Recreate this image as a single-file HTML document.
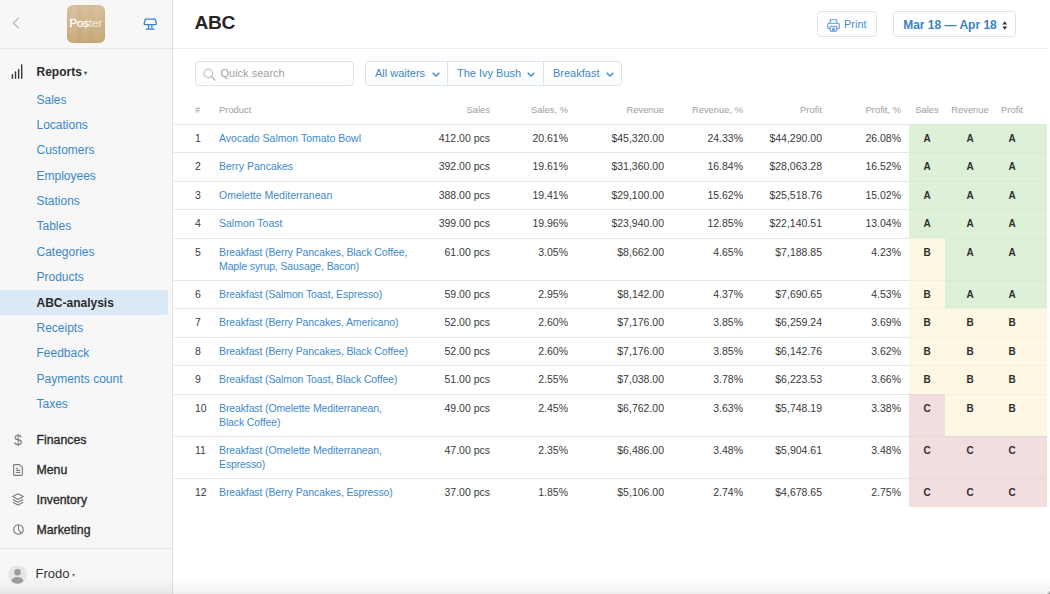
<!DOCTYPE html>
<html lang="en">
<head>
<meta charset="utf-8">
<title>ABC</title>
<style>
*{box-sizing:border-box;margin:0;padding:0}
html,body{width:1050px;height:594px;overflow:hidden;background:#fff}
body{font-family:"Liberation Sans",Arial,sans-serif;color:#333;position:relative;font-size:11px}
a{color:#3d8acb;text-decoration:none}
#side{position:absolute;left:0;top:0;width:173px;height:594px;background:#f7f7f7;border-right:1px solid #e2e2e2}
#side .top{position:absolute;left:0;top:0;width:172px;height:49px;border-bottom:1px solid #e8e8e8}
#logo{position:absolute;left:66.500px;top:5px;width:38.500px;height:37.500px;border-radius:6px;background:linear-gradient(90deg,rgba(255,255,255,0) 0,rgba(255,255,255,.07) 20%,rgba(0,0,0,.02) 32%,rgba(255,255,255,.06) 50%,rgba(0,0,0,.02) 62%,rgba(255,255,255,.05) 80%,rgba(0,0,0,.02) 100%),linear-gradient(180deg,#d7c09b 0,#d0b58b 50%,#c6a575 100%);color:#fff;font-size:11.5px;text-align:center;line-height:37px;letter-spacing:-0.1px}
.sec{position:absolute;left:36.500px;font-size:12px;font-weight:bold;color:#2b2b2b;white-space:nowrap}
.sub{position:absolute;left:36.500px;font-size:12px;color:#3a87c8;white-space:nowrap}
.ico{position:absolute}
#active{position:absolute;left:0;top:290px;width:168px;height:25px;background:#dbe8f5;border-radius:0 3px 3px 0}
#userbar{position:absolute;left:0;top:548px;width:172px;height:46px;border-top:1px solid #e2e2e2}
#main{position:absolute;left:173px;top:0;width:877px;height:594px}
#hdr{position:absolute;left:0;top:0;width:875px;height:49px;border-bottom:1px solid #efefef}
h1{position:absolute;left:21.500px;top:12px;font-size:19.200px;line-height:22px;font-weight:bold;color:#262626;letter-spacing:-0.3px}
.btn{position:absolute;border:1px solid #d9e5f1;border-radius:4px;background:#fff;color:#3a87c8;white-space:nowrap}
#search{position:absolute;left:22px;top:61px;width:158.500px;height:25px;border:1px solid #e0e0e0;border-radius:4px;color:#9e9e9e;font-size:11px;line-height:23px;padding-left:24.500px}
table{position:absolute;left:0;top:97px;width:874px;border-collapse:collapse;table-layout:fixed}
th{font-weight:normal;color:#a0a0a0;font-size:9.4px;height:27px;text-align:right;vertical-align:middle;padding:0 0 1px 0}
td{font-size:10.5px;color:#3a3a3a;text-align:right;vertical-align:top;padding:6px 0 0 0;border-top:1px solid #e6e6e6;line-height:14px;height:28.5px}
tr.two td{height:42px}
td.l,th.l{text-align:left}
td.l a{display:inline-block;max-width:189.6px}
a.bf{letter-spacing:-0.12px}
td.c,th.c{text-align:center}
td.g{background:#dff0d8;border-top-color:#d9ead2}
td.y{background:#fcf8e3;border-top-color:#f4f0db}
td.r{background:#f2dede;border-top-color:#ead6d6}
td.g,td.y,td.r{font-weight:bold;text-align:center;font-size:10px;padding-top:7px;color:#2e2e2e}
tr>td:last-child,tr>th:last-child{padding-right:18px}
#fade{position:absolute;left:0;top:577px;width:1050px;height:17px;background:linear-gradient(180deg,rgba(0,0,0,0) 0,rgba(0,0,0,0.025) 45%,rgba(0,0,0,0.04) 75%,rgba(0,0,0,0.07) 100%)}
</style>
</head>
<body>
<div id="side">
 <div class="top">
  <svg class="ico" style="left:12px;top:17px" width="8" height="12" viewBox="0 0 8 12"><path d="M6.800.800 1.400 6 6.800 11.200" fill="none" stroke="#bdbdbd" stroke-width="1.500"/></svg>
  <div id="logo"><b style="font-weight:normal;-webkit-text-stroke:0.3px #fff">Pos</b><span style="opacity:.72">ter</span></div>
  <svg class="ico" style="left:142.500px;top:18px" width="14.500" height="12.500" viewBox="0 0 16 13"><path d="M3.300.800h9.400q.9 0 1.100.9l.9 4q.2 1.100-.9 1.100H2.200q-1.100 0-.9-1.100l.9-4q.2-.9 1.100-.9zM6.200 6.800v4.900M9.800 6.800v4.900M3.800 11.900h8.400" fill="none" stroke="#3c80d6" stroke-width="1.400" stroke-linejoin="round" stroke-linecap="round"/></svg>
 </div>
 <svg class="ico" style="left:11px;top:64px" width="13" height="15" viewBox="0 0 13 15"><path d="M1.400 14.200v-3.600M4.500 14.200v-6.200M7.600 14.200v-8.800M10.700 14.200V1" stroke="#3a3a3a" stroke-width="1.450" fill="none" stroke-linecap="round"/></svg>
 <div class="sec" style="top:65px">Reports<span style="font-size:6px;vertical-align:1.500px;color:#555;margin-left:2.500px">&#9662;</span></div>
 <div id="active"></div>
 <a class="sub" style="top:93px">Sales</a>
 <a class="sub" style="top:118px">Locations</a>
 <a class="sub" style="top:143px">Customers</a>
 <a class="sub" style="top:169px">Employees</a>
 <a class="sub" style="top:194px">Stations</a>
 <a class="sub" style="top:219px">Tables</a>
 <a class="sub" style="top:245px">Categories</a>
 <a class="sub" style="top:270px">Products</a>
 <div class="sec" style="top:296px">ABC-analysis</div>
 <a class="sub" style="top:321px">Receipts</a>
 <a class="sub" style="top:346px">Feedback</a>
 <a class="sub" style="top:372px">Payments count</a>
 <a class="sub" style="top:397px">Taxes</a>
 <div class="sec" style="top:433px;font-weight:normal;font-size:12.300px;-webkit-text-stroke:0.35px #2b2b2b">Finances</div>
 <div class="sec" style="top:463px;font-weight:normal;font-size:12.300px;-webkit-text-stroke:0.35px #2b2b2b">Menu</div>
 <div class="sec" style="top:493px;font-weight:normal;font-size:12.300px;-webkit-text-stroke:0.35px #2b2b2b">Inventory</div>
 <div class="sec" style="top:523px;font-weight:normal;font-size:12.300px;-webkit-text-stroke:0.35px #2b2b2b">Marketing</div>
 <div class="ico" style="left:14px;top:431.500px;font-size:14.500px;color:#7a7a7a;line-height:16px">$</div>
 <svg class="ico" style="left:12.500px;top:464px" width="10" height="12" viewBox="0 0 10 12"><path d="M1.800.600h4.600L9.400 3.500v6.700q0 1.200-1.200 1.200H1.800q-1.200 0-1.200-1.200V1.800Q.6.600 1.800.600zM2.800 4.300h2.400M2.800 6.400h4.400M2.800 8.500h4.400" fill="none" stroke="#7a7a7a" stroke-width="1.100" stroke-linejoin="round"/></svg>
 <svg class="ico" style="left:11.500px;top:493px" width="12" height="13" viewBox="0 0 12 13"><path d="M6 .700 11.200 3.600 6 6.500.8 3.600zM.8 6.400 6 9.300 11.200 6.400M.8 9.200 6 12.100 11.200 9.200" fill="none" stroke="#7a7a7a" stroke-width="1.100" stroke-linejoin="round"/></svg>
 <svg class="ico" style="left:12.500px;top:523.500px" width="11" height="11" viewBox="0 0 11 11"><circle cx="5.500" cy="5.500" r="4.800" fill="none" stroke="#7a7a7a" stroke-width="1.100"/><path d="M5.500.700v4.800l2.900 3.800" fill="none" stroke="#7a7a7a" stroke-width="1.100" stroke-linejoin="round"/></svg>
 <div id="userbar">
  <svg class="ico" style="left:8px;top:15.500px" width="19" height="19" viewBox="0 0 19 19"><defs><clipPath id="av"><circle cx="9.500" cy="9.500" r="9.200"/></clipPath></defs><circle cx="9.500" cy="9.500" r="9.200" fill="#e6e6e6"/><g clip-path="url(#av)" fill="#9c9c9c"><circle cx="9.500" cy="7.200" r="3.300"/><path d="M3.300 17.500q0-5.600 6.200-5.600t6.200 5.600v2H3.300z"/></g></svg>
  <div class="sec" style="left:35.500px;top:17px;font-weight:normal;font-size:13px;color:#333">Frodo<span style="font-size:6px;vertical-align:1.500px;color:#777;margin-left:3px">&#9662;</span></div>
 </div>
</div>
<div id="main">
 <div id="hdr">
  <h1>ABC</h1>
  <div class="btn" style="left:643.500px;top:11px;width:60px;height:25.500px;font-size:11px;line-height:24px;padding-left:26.500px;color:#4a8fd0">Print
   <svg class="ico" style="left:9px;top:6.500px" width="13" height="13" viewBox="0 0 13 13"><path d="M3.200 4.200V1.600q0-.8.800-.8h5q.8 0 .8.800v2.600M3.200 9.600H1.900q-1.200 0-1.200-1.200V5.600q0-1.400 1.400-1.400h8.800q1.400 0 1.400 1.400v2.800q0 1.200-1.200 1.200H9.800M3.200 7.300h6.600v3.900q0 .9-.9.900H4.100q-.9 0-.9-.9zM5 9.300h3M5 10.600h3" fill="none" stroke="#5b9bd8" stroke-width="1.100" stroke-linejoin="round"/></svg>
  </div>
  <div class="btn" style="left:719.500px;top:11px;width:123.500px;height:25.500px;font-size:12px;font-weight:bold;line-height:26px;padding-left:9.700px;color:#3a82c4">Mar 18 — Apr 18
   <svg class="ico" style="left:108.500px;top:9.300px" width="5.500" height="9" viewBox="0 0 6 10"><path d="M3 0.300 5.600 4H.4zM3 9.700 5.600 6H.4z" fill="#333"/></svg>
  </div>
 </div>
 <div id="search">Quick search
  <svg class="ico" style="left:7px;top:6px" width="13" height="13" viewBox="0 0 13 13"><circle cx="5.300" cy="5.300" r="4.300" fill="none" stroke="#b0b0b0" stroke-width="1"/><path d="M8.400 8.400 12 12" stroke="#b0b0b0" stroke-width="1.200" stroke-linecap="round"/></svg>
 </div>
 <div class="btn" style="left:191.500px;top:61px;width:257.500px;height:25px;font-size:11px;line-height:23px">
   <span style="position:absolute;left:9.500px">All waiters</span>
   <svg class="ico" style="left:66px;top:9.500px" width="8" height="5" viewBox="0 0 8 5"><path d="M.7.700 4 4 7.300.7" fill="none" stroke="#3a87c8" stroke-width="1.300"/></svg>
   <span style="position:absolute;left:81.500px;top:0;height:23px;border-left:1px solid #d6e3f1"></span>
   <span style="position:absolute;left:91.500px">The Ivy Bush</span>
   <svg class="ico" style="left:161.500px;top:9.500px" width="8" height="5" viewBox="0 0 8 5"><path d="M.7.700 4 4 7.300.7" fill="none" stroke="#3a87c8" stroke-width="1.300"/></svg>
   <span style="position:absolute;left:177px;top:0;height:23px;border-left:1px solid #d6e3f1"></span>
   <span style="position:absolute;left:187.500px">Breakfast</span>
   <svg class="ico" style="left:240px;top:9.500px" width="8" height="5" viewBox="0 0 8 5"><path d="M.7.700 4 4 7.300.7" fill="none" stroke="#3a87c8" stroke-width="1.300"/></svg>
 </div>
 <table>
  <colgroup><col style="width:22px"><col style="width:24px"><col style="width:200px"><col style="width:71px"><col style="width:78px"><col style="width:96px"><col style="width:79px"><col style="width:79px"><col style="width:79px"><col style="width:8px"><col style="width:36px"><col style="width:50px"><col style="width:52px"></colgroup>
  <tr><th></th><th class="l">#</th><th class="l">Product</th><th>Sales</th><th>Sales, %</th><th>Revenue</th><th>Revenue, %</th><th>Profit</th><th>Profit, %</th><th></th><th class="c">Sales</th><th class="c">Revenue</th><th class="c">Profit</th></tr>
  <tr><td></td><td class="l">1</td><td class="l"><a>Avocado Salmon Tomato Bowl</a></td><td>412.00 pcs</td><td>20.61%</td><td>$45,320.00</td><td>24.33%</td><td>$44,290.00</td><td>26.08%</td><td></td><td class="g">A</td><td class="g">A</td><td class="g">A</td></tr>
  <tr><td></td><td class="l">2</td><td class="l"><a>Berry Pancakes</a></td><td>392.00 pcs</td><td>19.61%</td><td>$31,360.00</td><td>16.84%</td><td>$28,063.28</td><td>16.52%</td><td></td><td class="g">A</td><td class="g">A</td><td class="g">A</td></tr>
  <tr><td></td><td class="l">3</td><td class="l"><a>Omelette Mediterranean</a></td><td>388.00 pcs</td><td>19.41%</td><td>$29,100.00</td><td>15.62%</td><td>$25,518.76</td><td>15.02%</td><td></td><td class="g">A</td><td class="g">A</td><td class="g">A</td></tr>
  <tr><td></td><td class="l">4</td><td class="l"><a>Salmon Toast</a></td><td>399.00 pcs</td><td>19.96%</td><td>$23,940.00</td><td>12.85%</td><td>$22,140.51</td><td>13.04%</td><td></td><td class="g">A</td><td class="g">A</td><td class="g">A</td></tr>
  <tr class="two"><td></td><td class="l">5</td><td class="l"><a class="bf">Breakfast (Berry Pancakes, Black Coffee, Maple syrup, Sausage, Bacon)</a></td><td>61.00 pcs</td><td>3.05%</td><td>$8,662.00</td><td>4.65%</td><td>$7,188.85</td><td>4.23%</td><td></td><td class="y">B</td><td class="g">A</td><td class="g">A</td></tr>
  <tr><td></td><td class="l">6</td><td class="l"><a class="bf">Breakfast (Salmon Toast, Espresso)</a></td><td>59.00 pcs</td><td>2.95%</td><td>$8,142.00</td><td>4.37%</td><td>$7,690.65</td><td>4.53%</td><td></td><td class="y">B</td><td class="g">A</td><td class="g">A</td></tr>
  <tr><td></td><td class="l">7</td><td class="l"><a class="bf">Breakfast (Berry Pancakes, Americano)</a></td><td>52.00 pcs</td><td>2.60%</td><td>$7,176.00</td><td>3.85%</td><td>$6,259.24</td><td>3.69%</td><td></td><td class="y">B</td><td class="y">B</td><td class="y">B</td></tr>
  <tr><td></td><td class="l">8</td><td class="l"><a class="bf">Breakfast (Berry Pancakes, Black Coffee)</a></td><td>52.00 pcs</td><td>2.60%</td><td>$7,176.00</td><td>3.85%</td><td>$6,142.76</td><td>3.62%</td><td></td><td class="y">B</td><td class="y">B</td><td class="y">B</td></tr>
  <tr><td></td><td class="l">9</td><td class="l"><a class="bf">Breakfast (Salmon Toast, Black Coffee)</a></td><td>51.00 pcs</td><td>2.55%</td><td>$7,038.00</td><td>3.78%</td><td>$6,223.53</td><td>3.66%</td><td></td><td class="y">B</td><td class="y">B</td><td class="y">B</td></tr>
  <tr class="two"><td></td><td class="l">10</td><td class="l"><a class="bf">Breakfast (Omelette Mediterranean, Black Coffee)</a></td><td>49.00 pcs</td><td>2.45%</td><td>$6,762.00</td><td>3.63%</td><td>$5,748.19</td><td>3.38%</td><td></td><td class="r">C</td><td class="y">B</td><td class="y">B</td></tr>
  <tr class="two"><td></td><td class="l">11</td><td class="l"><a class="bf">Breakfast (Omelette Mediterranean, Espresso)</a></td><td>47.00 pcs</td><td>2.35%</td><td>$6,486.00</td><td>3.48%</td><td>$5,904.61</td><td>3.48%</td><td></td><td class="r">C</td><td class="r">C</td><td class="r">C</td></tr>
  <tr><td></td><td class="l">12</td><td class="l"><a class="bf">Breakfast (Berry Pancakes, Espresso)</a></td><td>37.00 pcs</td><td>1.85%</td><td>$5,106.00</td><td>2.74%</td><td>$4,678.65</td><td>2.75%</td><td></td><td class="r">C</td><td class="r">C</td><td class="r">C</td></tr>
 </table>
</div>
<div id="fade"></div>
<div style="position:absolute;right:0;bottom:0;width:3px;height:3px;background:radial-gradient(circle at 0 0,rgba(120,120,120,0) 0,rgba(120,120,120,0) 1.8px,rgba(120,120,120,.8) 3.6px)"></div>
</body>
</html>
